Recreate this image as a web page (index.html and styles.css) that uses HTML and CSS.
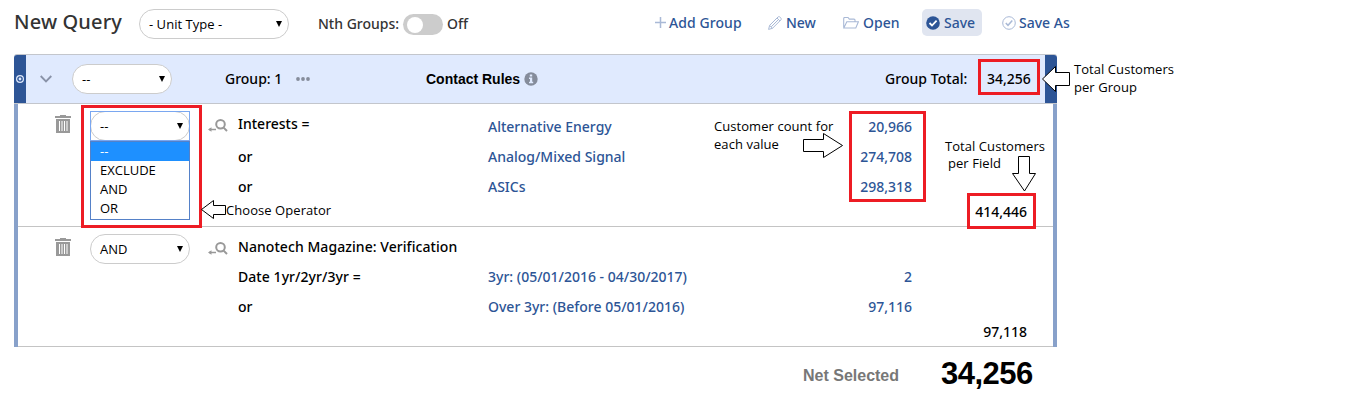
FILE: index.html
```html
<!DOCTYPE html>
<html lang="en">
<head>
<meta charset="utf-8">
<title>New Query</title>
<link rel="stylesheet" href="styles.css">
</head>
<body>
<svg class="defs" width="0" height="0" aria-hidden="true">
  <symbol id="trash" viewBox="0 0 16 19"><path fill="#999" fill-rule="evenodd" d="M0 1h5V0h6v1h5v2H0zM1 4h14v14H1zM4 6v10h1v-10zM6.5 6v10h1v-10zM9 6v10h1v-10zM11.5 6v10h1v-10z"/></symbol>
  <symbol id="find" viewBox="0 0 20 14"><g fill="none" stroke="#999" stroke-width="2"><circle cx="12.5" cy="5.3" r="4.3"/><path d="M15.6 8.6l3.4 3.4"/><path stroke-width="1.5" d="M1 10.5h7"/></g><path fill="#999" d="M0 10.5l3.5-2.2v4.4z"/></symbol>
</svg>
<div class="page">
  <header class="toolbar">
    <h1 class="title">New Query</h1>
    <div class="select unit"><span>- Unit Type -</span><i class="caret"></i></div>
    <span class="nth">Nth Groups:</span>
    <span class="toggle"></span>
    <span class="off">Off</span>
    <nav class="actions">
      <a class="action add"><svg width="11" height="11" viewBox="0 0 11 11"><path d="M5.5 0v11M0 5.5h11" stroke="#a9b9d6" stroke-width="1.5"/></svg>Add Group</a>
      <a class="action new"><svg width="14" height="14" viewBox="0 0 14 14"><path d="M.6 13.4l1-4L10 1c1.3-1.3 4.1 1.4 2.9 2.9L4.5 12.3zM1.7 9.5l2.8 2.8M9 2l2.9 2.9M3.2 10.8l6.9-6.9" fill="none" stroke="#a9b9d6" stroke-width="1"/></svg>New</a>
      <a class="action open"><svg width="16" height="12" viewBox="0 0 16 12"><path d="M.7 10.5V1.5q0-1 1-1H5l1.3 1.6H11q1 0 1 1v1.6M.8 11l3-6.2h11.6l-2.6 6.2z" fill="none" stroke="#a9b9d6" stroke-width="1.1"/></svg>Open</a>
      <a class="action save"><svg width="14" height="14" viewBox="0 0 14 14"><circle cx="7" cy="7" r="6.8" fill="#2d5596"/><path d="M3.5 7l2.5 2.5 4.6-4.8" fill="none" stroke="#fff" stroke-width="1.8"/></svg>Save</a>
      <a class="action saveas"><svg width="14" height="14" viewBox="0 0 14 14"><circle cx="7" cy="7" r="6.3" fill="none" stroke="#a9b9d6"/><path d="M3.8 7l2.2 2.3 4.3-4.7" fill="none" stroke="#a9b9d6" stroke-width="1.5"/></svg>Save As</a>
    </nav>
  </header>

  <section class="group">
    <div class="group-head">
      <span class="handle"><svg width="8" height="8" viewBox="0 0 8 8"><circle cx="4" cy="4" r="3.4" fill="none" stroke="#dfe9fc" stroke-width="1.2"/><circle cx="4" cy="4" r="1.4" fill="#dfe9fc"/></svg></span>
      <svg class="chevron" width="12" height="8" viewBox="0 0 12 8"><path d="M.7 1l5.3 5.4L11.3 1" fill="none" stroke="#8992a8" stroke-width="1.8"/></svg>
      <div class="select small"><span>--</span><i class="caret"></i></div>
      <span class="group-name">Group: 1</span>
      <svg class="dots" width="14" height="4" viewBox="0 0 14 4"><g fill="#858c9b"><circle cx="2" cy="2" r="1.9"/><circle cx="7" cy="2" r="1.9"/><circle cx="12" cy="2" r="1.9"/></g></svg>
      <b class="rules">Contact Rules</b>
      <svg class="info" width="14" height="14" viewBox="0 0 14 14"><circle cx="7" cy="7" r="6.7" fill="#858c9b"/><path d="M5.8 2.5h2.4v2H5.8zM5 5.5h3.2v4.2h1v1.5H5V9.7h1V7H5z" fill="#e0eafe"/></svg>
      <span class="total-label">Group Total:</span>
      <span class="group-total">34,256</span>
      <span class="end"></span>
    </div>

    <div class="rule first">
      <svg class="trash" width="16" height="19"><use href="#trash"/></svg>
      <div class="select small focused"><span>--</span><i class="caret"></i>
        <ul class="menu"><li class="on">--</li><li>EXCLUDE</li><li>AND</li><li>OR</li></ul>
      </div>
      <svg class="find" width="20" height="14"><use href="#find"/></svg>
      <div class="lines"><span class="lift">Interests =</span><span>or</span><span>or</span></div>
      <div class="lines link"><span>Alternative Energy</span><span>Analog/Mixed Signal</span><span>ASICs</span></div>
      <div class="lines link num"><span>20,966</span><span>274,708</span><span>298,318</span></div>
      <span class="field-total">414,446</span>
    </div>

    <div class="rule second">
      <svg class="trash" width="16" height="19"><use href="#trash"/></svg>
      <div class="select small"><span>AND</span><i class="caret"></i></div>
      <svg class="find" width="20" height="14"><use href="#find"/></svg>
      <div class="lines"><span class="wide">Nanotech Magazine: Verification</span><span class="wide">Date 1yr/2yr/3yr =</span><span>or</span></div>
      <div class="lines link"><span></span><span>3yr: (05/01/2016 - 04/30/2017)</span><span>Over 3yr: (Before 05/01/2016)</span></div>
      <div class="lines link num"><span></span><span>2</span><span>97,116</span></div>
      <span class="field-total">97,118</span>
    </div>
  </section>

  <footer class="net"><span class="net-label">Net Selected</span><span class="net-total">34,256</span></footer>

  <i class="mark mark-group"></i>
  <i class="mark mark-menu"></i>
  <i class="mark mark-counts"></i>
  <i class="mark mark-field"></i>
  <svg class="arrow arrow-group" width="29" height="26" viewBox="0 0 29 26"><path d="M.5 13L13.5.5v6h14v13h-14v6z"/></svg>
  <svg class="arrow arrow-menu" width="26" height="19" viewBox="0 0 26 19"><path d="M.5 9.5l12-9v5h12v9h-12v4z"/></svg>
  <svg class="arrow arrow-counts" width="41" height="25" viewBox="0 0 41 25"><path d="M.5 6.5h20v-6l19 12-19 12v-6H.5z"/></svg>
  <svg class="arrow arrow-field" width="25" height="36" viewBox="0 0 25 36"><path d="M6.5.5h11v17h6l-11 17.5-12-17.5h6z"/></svg>
  <p class="note note-group">Total Customers<br>per Group</p>
  <p class="note note-menu">Choose Operator</p>
  <p class="note note-counts">Customer count for<br>each value</p>
  <p class="note note-field">Total Customers<br><span>per Field</span></p>
</div>
</body>
</html>
```
FILE: styles.css
```css
* { box-sizing: border-box; }
body { margin: 0; background: #fff; color: #000; font: 500 14px/30px "Noto Sans", sans-serif; }
.defs { position: absolute; }
.page { position: relative; width: 1349px; height: 401px; overflow: hidden; white-space: nowrap; }

.toolbar { display: grid; grid-template-columns: 125px 179px 85px 44px 203px 430px; height: 54px; padding: 9px 0 0 14px; align-items: start; color: #333; }
.title { margin: -2px 0 0; font-size: 20px; font-weight: 500; line-height: 30px; letter-spacing: .15px; }
.select { position: relative; display: flex; align-items: center; justify-content: space-between; height: 30px; padding: 0 6px 0 9px; border: 1px solid #ccc; border-radius: 15px; background: #fff; color: #000; font: 400 13px/28px "Open Sans", sans-serif; }
.select.unit { width: 150px; letter-spacing: .03px; }
.select.small { width: 100px; }
.caret { width: 0; height: 0; border: 3px solid transparent; border-top: 6px solid #000; border-bottom: 0; }
.toggle { width: 40px; height: 21px; margin-top: 5px; padding: 3px 4px; border-radius: 11px; background: #ccc; }
.toggle::before { content: ""; display: block; width: 16px; height: 16px; border-radius: 50%; background: #fff; }
.actions { display: flex; color: #2d5596; line-height: 27px; }
.action { display: flex; align-items: center; height: 27px; }
.add { width: 113px; gap: 3px; margin-left: 5px; letter-spacing: .08px; }
.new { width: 75px; gap: 4px; }
.open { width: 79px; gap: 4px; }
.save { width: 60px; gap: 4px; padding-left: 4px; border-radius: 5px; background: #e0e5f0; }
.saveas { gap: 3px; margin-left: 20px; }

.group { width: 1043px; margin-left: 14px; }
.group-head { display: grid; grid-template-columns: 26px 32px 153px 71px 130px 98px 361px 102px 58px 12px; align-items: center; height: 50px; border: solid #c3c6cc; border-width: 1px 0; border-radius: 3px 3px 0 0; background: #e0eafe; }
.handle { display: flex; align-items: center; width: 12px; height: 48px; padding-left: 2px; border-radius: 3px 0 0; background: #2d5596; }
.group-name { line-height: 48px; }
.rules { font: bold 14px/48px "Liberation Sans", Arial, sans-serif; }
.total-label { line-height: 48px; letter-spacing: .05px; }
.end { width: 12px; height: 48px; border-radius: 0 3px 0 0; background: #2d5596; }

.rule { display: grid; grid-template-columns: 35px 118px 30px 250px 300px 124px 115px; align-items: start; border: 4px solid #88a1ca; border-width: 0 4px; padding-left: 37px; background: linear-gradient(#c4c4c4, #c4c4c4) bottom / 100% 1px no-repeat; }
.first { height: 123px; padding-top: 8px; }
.second { height: 120px; padding-top: 5px; }
.first .trash { margin-top: 3px; }
.second .trash { margin-top: 6px; }
.first .select { margin-top: -1px; }
.second .select { margin-top: 2px; }
.first .find { margin-top: 7px; }
.second .find { margin-top: 10px; }
.lines { display: grid; grid-auto-rows: 30px; }
.lift { margin-top: -3px; }
.wide { letter-spacing: .06px; }
.link { color: #2d5596; }
.num, .field-total { text-align: right; }
.field-total { align-self: start; margin-top: 85px; }

.focused::before { content: ""; position: absolute; inset: -1px; border: 1px solid #7aa7f0; }
.menu { position: absolute; left: -1px; top: 29px; width: 100px; height: 79px; margin: 0; padding: 0; border: 1px solid #5581c8; background: #fff; list-style: none; line-height: 19px; }
.menu li { height: 19px; padding-left: 9px; }
.menu .on { background: #1e90ff; color: #fff; }

.net { display: flex; align-items: center; padding: 1px 0 0 803px; font-family: "Liberation Sans", Arial, sans-serif; font-weight: bold; line-height: 46px; }
.net-label { width: 138px; padding-top: 5px; color: #777; font-size: 16px; }
.net-total { font-size: 31px; letter-spacing: -.5px; }

.mark { position: absolute; border: 3px solid #ed1c24; }
.mark-group { left: 978px; top: 59px; width: 62px; height: 36px; }
.mark-menu { left: 81px; top: 105px; width: 121px; height: 123px; }
.mark-counts { left: 849px; top: 111px; width: 77px; height: 91px; }
.mark-field { left: 967px; top: 193px; width: 69px; height: 36px; }
.arrow { position: absolute; fill: #fff; stroke: #000; }
.arrow-group { left: 1042px; top: 66px; }
.arrow-menu { left: 201px; top: 200px; }
.arrow-counts { left: 803px; top: 133px; }
.arrow-field { left: 1012px; top: 156px; }
.note { position: absolute; margin: 0; font: 400 13px/18px "Open Sans", sans-serif; letter-spacing: .06px; }
.note-group { left: 1074px; top: 60px; }
.note-menu { left: 226px; top: 201px; }
.note-counts { left: 714px; top: 117px; }
.note-field { left: 945px; top: 138px; line-height: 17px; }
.note-field span { padding-left: 3px; }
```
